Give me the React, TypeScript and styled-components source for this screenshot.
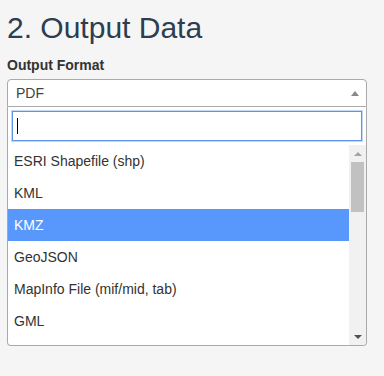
import React from 'react';
import styled, {createGlobalStyle} from 'styled-components';

const formats: string[] = [
  'ESRI Shapefile (shp)',
  'KML',
  'KMZ',
  'GeoJSON',
  'MapInfo File (mif/mid, tab)',
  'GML',
];

const App: React.FC = () => {
  const highlighted = 'KMZ';

  return (
    <>
      <GlobalStyle />
      <Page>
        <Heading>2. Output Data</Heading>
        <Label>Output Format</Label>
        <Select>
          <Selection>
            <span>PDF</span>
            <Arrow />
          </Selection>
          <Dropdown>
            <SearchBox>
              <SearchField>
                <Caret />
              </SearchField>
            </SearchBox>
            <ListWrap>
              <Options>
                {formats.map((f: string) => (
                  <Option key={f} active={f === highlighted}>
                    {f}
                  </Option>
                ))}
              </Options>
              <ScrollBar>
                <ScrollArrow up />
                <Thumb />
                <ScrollTrack />
                <ScrollArrow />
              </ScrollBar>
            </ListWrap>
          </Dropdown>
        </Select>
      </Page>
    </>
  );
};

export default App;

const GlobalStyle = createGlobalStyle`
  body {
    margin: 0;
    background: #f5f5f5;
    font-family: "Liberation Sans", Arial, sans-serif;
    color: #333;
  }
`;

const Page = styled.div`
  padding: 11px 17px 0 7px;
`;

const Heading = styled.h2`
  margin: 0 0 11px;
  font-size: 30px;
  line-height: 33px;
  font-weight: 400;
  color: #2c3e50;
`;

const Label = styled.label`
  display: block;
  font-size: 14px;
  line-height: 20px;
  font-weight: 700;
  margin-bottom: 4px;
`;

const Select = styled.div`
  width: 360px;
`;

const Selection = styled.div`
  display: flex;
  align-items: center;
  justify-content: space-between;
  height: 26px;
  padding: 0 7px 0 8px;
  background: #fff;
  border: 1px solid #aaa;
  border-radius: 4px 4px 0 0;
  font-size: 14px;
  line-height: 26px;
  color: #444;
`;

const Arrow = styled.span`
  width: 0;
  height: 0;
  border-style: solid;
  border-width: 0 4px 5px 4px;
  border-color: transparent transparent #888 transparent;
`;

const Dropdown = styled.div`
  background: #fff;
  border: 1px solid #aaa;
  border-top: none;
  border-radius: 0 0 4px 4px;
  overflow: hidden;
`;

const SearchBox = styled.div`
  padding: 4px;
`;

const SearchField = styled.div`
  display: flex;
  align-items: center;
  height: 28px;
  padding: 0 4px;
  border: 1px solid #5b95f0;
  box-shadow: 0 0 0 1px rgba(120, 165, 240, 0.45);
`;

const Caret = styled.span`
  width: 1px;
  height: 16px;
  background: #000;
`;

const ListWrap = styled.div`
  display: flex;
  height: 200px;
`;

const Options = styled.ul`
  flex: 1;
  margin: 0;
  padding: 0;
  list-style: none;
  overflow: hidden;
`;

const Option = styled.li<{active?: boolean}>`
  padding: 6px;
  line-height: 20px;
  font-size: 14px;
  color: ${p => (p.active ? '#fff' : '#333')};
  background: ${p => (p.active ? '#5897fb' : '#fff')};
`;

const ScrollBar = styled.div`
  width: 17px;
  display: flex;
  flex-direction: column;
  align-items: center;
  background: #f1f1f1;
`;

const ScrollArrow = styled.div<{up?: boolean}>`
  height: 17px;
  width: 17px;
  display: flex;
  align-items: center;
  justify-content: center;
  &::after {
    content: '';
    border-style: solid;
    border-width: ${p => (p.up ? '0 4px 4px 4px' : '4px 4px 0 4px')};
    border-color: ${p =>
      p.up
        ? 'transparent transparent #a3a3a3 transparent'
        : '#505050 transparent transparent transparent'};
  }
`;

const Thumb = styled.div`
  width: 13px;
  height: 50px;
  background: #c1c1c1;
`;

const ScrollTrack = styled.div`
  flex: 1;
`;
